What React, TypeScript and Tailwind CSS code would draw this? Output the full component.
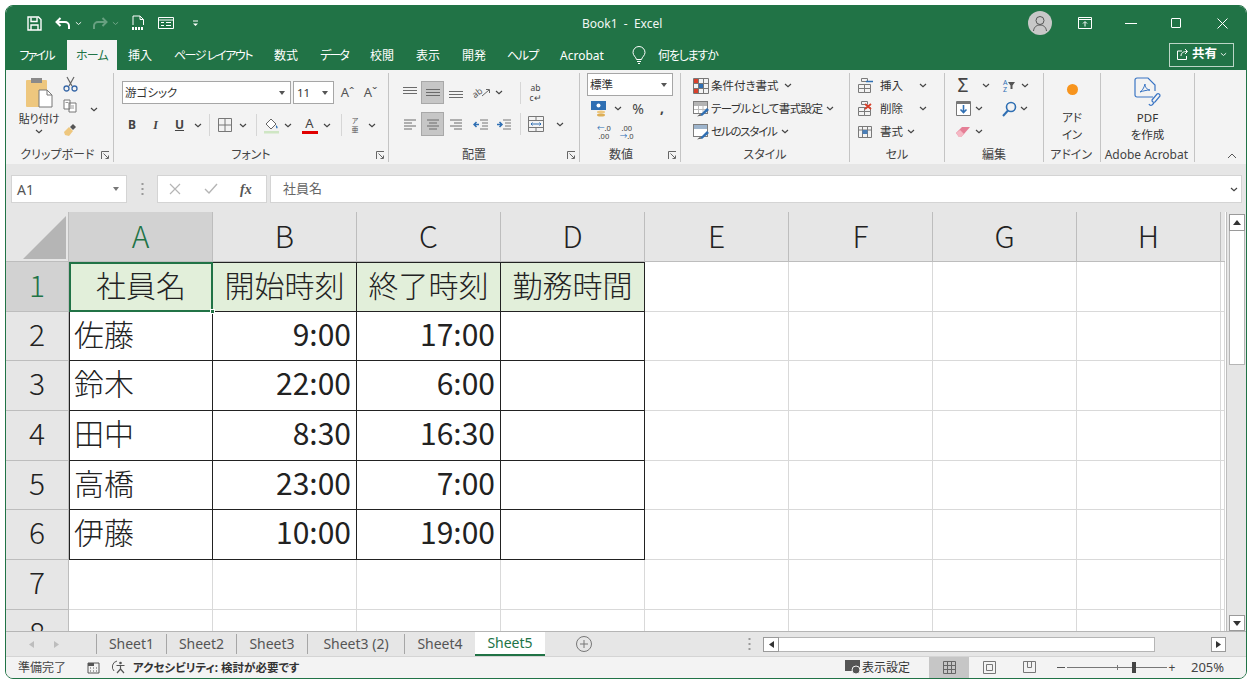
import React from 'react';

function Chev({ className = '' }: { className?: string }) {
  return (
    <svg width="8" height="5" viewBox="0 0 8 5" className={className}>
      <path d="M1 1l3 2.6L7 1" fill="none" stroke="#444" strokeWidth="1.2" />
    </svg>
  );
}

function Launcher() {
  return (
    <svg width="9" height="9" viewBox="0 0 9 9">
      <path d="M.5 8V.5H8M2.5 2.5L7 7M4.5 7.5H7.5V4.5" fill="none" stroke="#666" strokeWidth="1" />
    </svg>
  );
}

function Group({ w, label, launcher, labelClass = '', children }: { w: string; label: string; launcher?: boolean; labelClass?: string; children: React.ReactNode }) {
  return (
    <div className={`${w} shrink-0 h-[89px] flex flex-col border-r border-[#c4c4c4]`}>
      <div className="h-[75px] overflow-visible">{children}</div>
      <div className="h-[14px] flex items-center text-[12px] text-[#444]">
        <span className="w-[16px]" />
        <span className={`flex-1 text-center whitespace-nowrap ${labelClass}`}>{label}</span>
        <span className="w-[16px] pr-[3px] flex items-center justify-end">{launcher && <Launcher />}</span>
      </div>
    </div>
  );
}

function Slot({ w, children, on }: { w: string; children?: React.ReactNode; on?: boolean }) {
  return (
    <div className={`${w} h-full shrink-0 flex items-center justify-center ${on ? 'bg-[#c6c6c6] border border-[#a8a8a8]' : ''}`}>
      {children}
    </div>
  );
}

function Sep() {
  return <div className="w-[1px] h-[22px] shrink-0 bg-[#d6d6d6]" />;
}

function AlignIcon({ kind }: { kind: 'l' | 'c' | 'r' }) {
  const rows =
    kind === 'l'
      ? ['M1 2h12', 'M1 5h8', 'M1 8h12', 'M1 11h8']
      : kind === 'r'
        ? ['M1 2h12', 'M5 5h8', 'M1 8h12', 'M5 11h8']
        : ['M1 2h12', 'M3 5h8', 'M1 8h12', 'M3 11h8'];
  return (
    <svg width="14" height="13" viewBox="0 0 14 13">
      {rows.map((d) => (
        <path key={d} d={d} stroke="#6b6b6b" strokeWidth="1" />
      ))}
    </svg>
  );
}

function VAlignIcon({ pos }: { pos: 't' | 'm' | 'b' }) {
  const ys = pos === 't' ? [1, 4, 7] : pos === 'm' ? [3, 6, 9] : [5, 8, 11];
  return (
    <svg width="16" height="13" viewBox="0 0 16 13">
      {ys.map((v) => (
        <path key={v} d={`M1 ${v + 0.5}h14`} stroke="#6b6b6b" strokeWidth="1" />
      ))}
    </svg>
  );
}

function TableStyleIcon({ cell }: { cell?: boolean }) {
  return (
    <svg width="17" height="16" viewBox="0 0 17 16">
      <rect x=".5" y=".5" width="14" height="12" fill="#fff" stroke="#7d7d7d" />
      <rect x="1" y="1" width="13" height="4" fill={cell ? '#9db4cc' : '#b4b4b4'} />
      {!cell && <path d="M1 8.5h13M5.5 5v7M10 5v7" stroke="#bbb" />}
      <path d="M7 14l7-7 2 2-7 6z" fill="#2f6fb3" />
      <path d="M4 15.5l3-2.5 1.5 1.5z" fill="#555" />
    </svg>
  );
}

function CellsIcon({ kind }: { kind: 'ins' | 'del' | 'fmt' }) {
  return (
    <svg width="17" height="16" viewBox="0 0 17 16">
      {kind !== 'fmt' ? (
        <g fill="none" stroke="#7a7a7a">
          <path d="M4.5 .5h6v3h-6zM1.5 6.5h6v4h-6zM7.5 6.5h6v4h-6zM1.5 10.5h6v4h-6zM7.5 10.5h6v4h-6z" />
          {kind === 'ins' && <path d="M9 3.5h7" stroke="#2f6fb3" strokeWidth="1.4" />}
        </g>
      ) : (
        <g fill="none" stroke="#7a7a7a">
          <path d="M1.5 2.5h13v11h-13zM1.5 6h13M5.5 2.5v11M10.5 2.5v11" />
          <rect x="5.5" y="6" width="5" height="4" fill="#4a7fb8" stroke="none" />
        </g>
      )}
      {kind === 'del' && <path d="M8 3l6 5M14 3L8 8" stroke="#d8402b" strokeWidth="1.8" />}
    </svg>
  );
}

function Tab({ w, label, active, tr = '' }: { w: string; label: string; active?: boolean; tr?: string }) {
  return (
    <div className={`${w} h-full shrink-0 pt-[1px] flex items-center justify-center whitespace-nowrap text-[12px] ${tr} ${active ? 'bg-[#f3f3f3] text-[#217346]' : 'text-white'}`}>
      {label}
    </div>
  );
}

function ColHead({ c, on }: { c: string; on?: boolean }) {
  return (
    <div className={`flex items-center justify-center pb-[3px] text-[30px] font-light border-r border-b border-[#bdbdbd] ${on ? 'bg-[#d2d2d2] text-[#217346]' : 'bg-[#e6e6e6] text-[#222]'}`}>
      {c}
    </div>
  );
}

function RowHead({ n, on }: { n: number; on?: boolean }) {
  return (
    <div className={`flex items-center justify-center text-[30px] font-light border-r border-b border-[#bdbdbd] ${on ? 'bg-[#d2d2d2] text-[#217346] pb-[4px]' : 'bg-[#e6e6e6] text-[#222] pb-[6px]'}`}>
      {n}
    </div>
  );
}

function Blanks({ n }: { n: number }) {
  return (
    <>
      {Array.from({ length: n }).map((_, i) => (
        <div key={i} className="border-r border-b border-[#d9d9d9] bg-white" />
      ))}
    </>
  );
}

const rows = [
  { n: 2, name: '佐藤', a: '9:00', b: '17:00' },
  { n: 3, name: '鈴木', a: '22:00', b: '6:00' },
  { n: 4, name: '田中', a: '8:30', b: '16:30' },
  { n: 5, name: '高橋', a: '23:00', b: '7:00' },
  { n: 6, name: '伊藤', a: '10:00', b: '19:00' },
];

const sheets = [
  { s: 'Sheet1', w: 'w-[70px]' },
  { s: 'Sheet2', w: 'w-[70px]' },
  { s: 'Sheet3', w: 'w-[71px]' },
  { s: 'Sheet3 (2)', w: 'w-[97px]' },
  { s: 'Sheet4', w: 'w-[71px]' },
];

const headCell = 'bg-[#e2efda] border-t border-r border-b border-[#222] flex items-center justify-center pb-[4px] text-[30px] font-light text-[#222] whitespace-nowrap';
const bodyCell = 'bg-white border-r border-b border-[#222] flex items-center pb-[6px] text-[30px] text-[#222] whitespace-nowrap';

export default function App() {
  return (
    <div className="w-[1252px] h-[685px] bg-white pt-[5px] pl-[5px] overflow-hidden [font-family:'Noto_Sans','Noto_Sans_CJK_JP',sans-serif] [font-feature-settings:'palt']">
      <div className="w-[1242px] h-[674px] rounded-[8px] overflow-hidden border border-[#217346] flex flex-col bg-[#e6e6e6]">
        {/* title bar */}
        <div className="h-[34px] shrink-0 bg-[#217346] flex items-center text-white">
          <div className="w-[21px] shrink-0" />
          <svg width="15" height="15" viewBox="0 0 15 15" className="shrink-0">
            <path d="M1 1h10.5L14 3.5V14H1z" fill="none" stroke="#fff" strokeWidth="1.4" />
            <path d="M4 1.5v4h6v-4M4 14V9h7v5" fill="none" stroke="#fff" strokeWidth="1.4" />
          </svg>
          <div className="w-[13px] shrink-0" />
          <svg width="16" height="13" viewBox="0 0 16 13" className="shrink-0">
            <path d="M5.5 1L1.5 5l4 4M2 5h8a4 4 0 0 1 4 4v3" fill="none" stroke="#fff" strokeWidth="2" />
          </svg>
          <svg width="7" height="5" viewBox="0 0 8 5" className="ml-[4px] shrink-0">
            <path d="M1 1l3 2.6L7 1" fill="none" stroke="#fff" />
          </svg>
          <div className="w-[10px] shrink-0" />
          <svg width="16" height="13" viewBox="0 0 16 13" className="shrink-0 opacity-40">
            <path d="M10.5 1l4 4-4 4M14 5H6a4 4 0 0 0-4 4v3" fill="none" stroke="#cfe3d7" strokeWidth="2" />
          </svg>
          <svg width="7" height="5" viewBox="0 0 8 5" className="ml-[4px] shrink-0 opacity-40">
            <path d="M1 1l3 2.6L7 1" fill="none" stroke="#fff" />
          </svg>
          <div className="w-[12px] shrink-0" />
          <svg width="14" height="16" viewBox="0 0 14 16" className="shrink-0">
            <path d="M2 10V1h7l3.5 3.5V10M9 1v3.5h3.5" fill="none" stroke="#fff" />
            <path d="M1 13.5h12" stroke="#fff" strokeWidth="3" strokeDasharray="2 1" />
          </svg>
          <div className="w-[13px] shrink-0" />
          <svg width="16" height="14" viewBox="0 0 16 14" className="shrink-0">
            <path d="M.5 1.5h15v11H.5zM.5 4h15" fill="none" stroke="#fff" />
            <path d="M3 6.5h3M3 9.5h3M8 6.5h5M8 9.5h5" stroke="#fff" />
          </svg>
          <div className="w-[18px] shrink-0" />
          <svg width="7" height="7" viewBox="0 0 7 7" className="shrink-0">
            <path d="M1 1h5" stroke="#fff" />
            <path d="M1 3.5h5L3.5 6z" fill="#fff" />
          </svg>
          <div className="flex-1 pl-[383px] pt-[1px] text-[12px] whitespace-nowrap text-[#f2f7f4]">Book1&nbsp; -&nbsp; Excel</div>
          <div className="w-[24px] h-[24px] rounded-full bg-[#c8c8c8] flex items-center justify-center shrink-0">
            <svg width="16" height="17" viewBox="0 0 16 17">
              <circle cx="8" cy="5.5" r="4" fill="none" stroke="#555" />
              <path d="M1.5 16c.5-4 3-6 6.5-6s6 2 6.5 6" fill="none" stroke="#555" />
            </svg>
          </div>
          <div className="w-[26px] shrink-0" />
          <svg width="14" height="12" viewBox="0 0 14 12" className="shrink-0">
            <path d="M.5 .5h13v11H.5zM.5 2.500h13" fill="none" stroke="#fff" />
            <path d="M7 9.500V5M5 6.500L7 4.500l2 2" fill="none" stroke="#fff" />
          </svg>
          <div className="w-[33px] shrink-0" />
          <div className="w-[12px] h-[1px] bg-white shrink-0" />
          <div className="w-[34px] shrink-0" />
          <div className="w-[10px] h-[10px] border border-white rounded-[1px] shrink-0" />
          <div className="w-[36px] shrink-0" />
          <svg width="11" height="11" viewBox="0 0 11 11" className="shrink-0">
            <path d="M.5 .5l10 10M10.5 .5l-10 10" stroke="#fff" />
          </svg>
          <div className="w-[18px] shrink-0" />
        </div>

        {/* ribbon tabs */}
        <div className="h-[30px] shrink-0 bg-[#217346] flex items-center">
          <Tab w="w-[61px]" label="ファイル" tr="tracking-[-1.8px]" />
          <Tab w="w-[50px]" label="ホーム" tr="tracking-[-0.8px]" active />
          <Tab w="w-[46px]" label="挿入" />
          <Tab w="w-[100px]" label="ページ レイアウト" tr="tracking-[-1.4px]" />
          <Tab w="w-[46px]" label="数式" />
          <Tab w="w-[50px]" label="データ" tr="tracking-[-2px]" />
          <Tab w="w-[46px]" label="校閲" />
          <Tab w="w-[46px]" label="表示" />
          <Tab w="w-[46px]" label="開発" />
          <Tab w="w-[51px]" label="ヘルプ" tr="tracking-[-1px]" />
          <Tab w="w-[68px]" label="Acrobat" />
          <div className="w-[16px] shrink-0" />
          <svg width="14" height="19" viewBox="0 0 14 19" className="shrink-0">
            <path d="M4.5 13.5C4 11 1 9.500 1 6.500a6 6 0 0 1 12 0c0 3-3 4.500-3.500 7zM5 15.500h4M6 17.500h2" fill="none" stroke="#fff" />
          </svg>
          <div className="w-[12px] shrink-0" />
          <span className="text-[12px] pt-[1px] tracking-[-1.2px] text-white whitespace-nowrap w-[60px] shrink-0">何をしますか</span>
          <div className="flex-1" />
          <div className="w-[65px] h-[24px] shrink-0 border border-[#bcd5c6] flex items-center justify-center gap-[3px] text-white mb-[1px]">
            <svg width="13" height="13" viewBox="0 0 13 13">
              <path d="M6 3H1.500v8.500h9V8M5 8c0-3 2-4.500 6-4.500M9 1l2.500 2.500L9 6" fill="none" stroke="#fff" />
            </svg>
            <span className="text-[12.500px] font-bold">共有</span>
            <svg width="7" height="5" viewBox="0 0 8 5">
              <path d="M1 1l3 2.600L7 1" fill="none" stroke="#fff" />
            </svg>
          </div>
          <div className="w-[12px] shrink-0" />
        </div>

        {/* ribbon */}
        <div className="h-[94px] shrink-0 bg-[#f3f3f3] flex items-start pt-[3px] text-[#333]">
          <Group w="w-[108px]" label="クリップボード" labelClass="pr-[4px]" launcher>
            <div className="flex h-full">
              <div className="w-[52px] shrink-0 flex flex-col items-center pl-[14px]">
                <svg width="28" height="32" viewBox="0 0 28 32" className="mt-[4px] shrink-0">
                  <rect x="1" y="3" width="21" height="27" rx="1" fill="#eec77e" />
                  <rect x="6" y="1" width="11" height="5" fill="#8a8a8a" />
                  <path d="M14 13h8l5 5v12H14z" fill="#fff" stroke="#777" />
                  <path d="M22 13v5h5" fill="none" stroke="#777" />
                </svg>
                <span className="text-[11px] tracking-[-0.3px] mt-[3px] whitespace-nowrap leading-[14px]">貼り付け</span>
                <Chev className="mt-[3px]" />
              </div>
              <div className="w-[24px] shrink-0 flex flex-col items-center pt-[3px]">
                <svg width="15" height="16" viewBox="0 0 15 16">
                  <path d="M4 1l5 9M11 1L6 10" stroke="#666" strokeWidth="1.200" />
                  <circle cx="3.500" cy="12.500" r="2.500" fill="none" stroke="#3a69a8" strokeWidth="1.300" />
                  <circle cx="11.500" cy="12.500" r="2.500" fill="none" stroke="#3a69a8" strokeWidth="1.300" />
                </svg>
                <svg width="14" height="14" viewBox="0 0 14 14" className="mt-[7px]">
                  <path d="M1 1h6v9H1zM6 4h7v9H6z" fill="#fff" stroke="#777" />
                  <path d="M8 7h3M8 9h3M2.500 3.500h3" stroke="#999" />
                </svg>
                <svg width="15" height="14" viewBox="0 0 15 14" className="mt-[10px]">
                  <path d="M1 9l5-5 4 4-4 5-4-1z" fill="#eec77e" />
                  <path d="M7 4l3-3 3 3-3 3z" fill="#555" />
                </svg>
              </div>
              <div className="flex items-start pt-[34px] pl-[8px]"><Chev /></div>
            </div>
          </Group>

          <Group w="w-[275px]" label="フォント" launcher>
            <div className="flex flex-col">
              <div className="flex items-center h-[23px] mt-[8px] pl-[8px]">
                <div className="w-[169px] h-[23px] shrink-0 bg-white border border-[#a6a6a6] flex items-center pl-[2px] pr-[5px] text-[11.500px] justify-between">
                  <span>游ゴシック</span>
                  <svg width="6" height="4" viewBox="0 0 6 4"><path d="M0 0h6L3 4z" fill="#555" /></svg>
                </div>
                <div className="w-[41px] h-[23px] ml-[2px] shrink-0 bg-white border border-[#a6a6a6] flex items-center pl-[3px] pr-[5px] text-[11.500px] justify-between">
                  <span>11</span>
                  <svg width="6" height="4" viewBox="0 0 6 4"><path d="M0 0h6L3 4z" fill="#555" /></svg>
                </div>
                <span className="ml-[2px] w-[23px] text-center text-[13px] text-[#555]">Aˆ</span>
                <span className="w-[23px] text-center text-[13px] text-[#555]">Aˇ</span>
              </div>
              <div className="flex items-center h-[24px] mt-[9px] pl-[7px]">
                <Slot w="w-[22px]"><span className="text-[12px] font-bold text-[#444]">B</span></Slot>
                <Slot w="w-[25px]"><span className="text-[12px] font-bold italic text-[#444] [font-family:'Liberation_Serif',serif]">I</span></Slot>
                <Slot w="w-[23px]"><span className="text-[12px] font-bold underline text-[#444]">U</span></Slot>
                <Slot w="w-[13px]"><Chev /></Slot>
                <Slot w="w-[11px]"><Sep /></Slot>
                <Slot w="w-[20px]">
                  <svg width="14" height="14" viewBox="0 0 14 14"><path d="M.5 .5h13v13H.5zM7 .5v13M.5 7h13" fill="none" stroke="#777" /></svg>
                </Slot>
                <Slot w="w-[15px]"><Chev /></Slot>
                <Slot w="w-[12px]"><Sep /></Slot>
                <Slot w="w-[18px]">
                  <svg width="15" height="17" viewBox="0 0 15 17">
                    <path d="M2 7l5-5 5 5-5 5z" fill="#fff" stroke="#666" />
                    <path d="M12 8c1 1 2 2 1.500 3s-2 0-1.500-3z" fill="#2f6fb3" />
                    <rect x="0" y="14" width="15" height="2.500" fill="#cfe6c4" />
                  </svg>
                </Slot>
                <Slot w="w-[16px]"><Chev /></Slot>
                <div className="w-[5px] shrink-0" />
                <Slot w="w-[17px]">
                  <div className="flex flex-col items-center leading-none">
                    <span className="text-[13px] text-[#444] leading-[13px]">A</span>
                    <span className="w-[16px] h-[3px] bg-[#e00000] mt-[1px]" />
                  </div>
                </Slot>
                <Slot w="w-[17px]"><Chev /></Slot>
                <Slot w="w-[12px]"><Sep /></Slot>
                <Slot w="w-[16px]">
                  <div className="flex flex-col items-center text-[7px] leading-[9px] text-[#555]">
                    <span>ア</span>
                    <span>亜</span>
                  </div>
                </Slot>
                <Slot w="w-[18px]"><Chev /></Slot>
              </div>
            </div>
          </Group>

          <Group w="w-[191px]" label="配置" labelClass="pr-[20px]" launcher>
            <div className="flex flex-col">
              <div className="flex items-center h-[23px] mt-[8px] pl-[10px]">
                <Slot w="w-[22px]"><VAlignIcon pos="t" /></Slot>
                <Slot w="w-[23px]" on><VAlignIcon pos="m" /></Slot>
                <Slot w="w-[24px]"><VAlignIcon pos="b" /></Slot>
                <Slot w="w-[26px]">
                  <div className="flex items-center">
                    <span className="text-[9px] leading-[10px] text-[#555] -rotate-[35deg]">ab</span>
                    <svg width="8" height="9" viewBox="0 0 8 9">
                      <path d="M0 8l7-6M4 1.500h3.500V5" fill="none" stroke="#666" />
                    </svg>
                  </div>
                </Slot>
                <Slot w="w-[10px]"><Chev /></Slot>
                <div className="w-[16px] shrink-0" />
                <Slot w="w-[1px]"><Sep /></Slot>
                <Slot w="w-[29px]">
                  <div className="flex flex-col items-center text-[8.500px] leading-[10px] text-[#444]">
                    <span>ab</span>
                    <span>c↵</span>
                  </div>
                </Slot>
              </div>
              <div className="flex items-center h-[24px] mt-[8px] pl-[10px]">
                <Slot w="w-[22px]"><AlignIcon kind="l" /></Slot>
                <Slot w="w-[23px]" on><AlignIcon kind="c" /></Slot>
                <Slot w="w-[24px]"><AlignIcon kind="r" /></Slot>
                <Slot w="w-[25px]">
                  <svg width="16" height="13" viewBox="0 0 16 13">
                    <path d="M7 2h8M9 5h6M9 8h6M7 11h8" stroke="#777" />
                    <path d="M1 6.500h5M3.500 4L1 6.500 3.500 9" fill="none" stroke="#2f6fb3" strokeWidth="1.500" />
                  </svg>
                </Slot>
                <Slot w="w-[22px]">
                  <svg width="16" height="13" viewBox="0 0 16 13">
                    <path d="M7 2h8M9 5h6M9 8h6M7 11h8" stroke="#777" />
                    <path d="M1 6.500h5M3.500 4L6 6.500 3.500 9" fill="none" stroke="#2f6fb3" strokeWidth="1.500" />
                  </svg>
                </Slot>
                <div className="w-[5px] shrink-0" />
                <Slot w="w-[1px]"><Sep /></Slot>
                <Slot w="w-[29px]">
                  <svg width="16" height="16" viewBox="0 0 16 16">
                    <path d="M.5 .5h15v15H.5zM.5 4.500h15M.5 11.500h15M8 .5v4M8 11.500v4" fill="none" stroke="#777" />
                    <path d="M3 8h10M4.500 6.500L3 8l1.500 1.500M11.500 6.500L13 8l-1.500 1.500" fill="none" stroke="#2f6fb3" />
                  </svg>
                </Slot>
                <div className="w-[3px] shrink-0" />
                <Slot w="w-[14px]"><Chev /></Slot>
              </div>
            </div>
          </Group>

          <Group w="w-[101px]" label="数値" labelClass="pr-[18px]" launcher>
            <div className="flex flex-col pl-[7px]">
              <div className="w-[86px] h-[23px] bg-white border border-[#a6a6a6] flex items-center justify-between pl-[2px] pr-[5px] text-[11.500px]">
                <span>標準</span>
                <svg width="6" height="4" viewBox="0 0 6 4"><path d="M0 0h6L3 4z" fill="#555" /></svg>
              </div>
              <div className="flex items-center h-[22px] mt-[1px]">
                <Slot w="w-[25px]">
                  <svg width="17" height="17" viewBox="0 0 17 17">
                    <rect x="0" y="1" width="15" height="9" fill="#2f6fb3" />
                    <circle cx="7.500" cy="5.500" r="2" fill="#fff" />
                    <ellipse cx="10" cy="12" rx="4" ry="1.500" fill="#eec77e" />
                    <ellipse cx="10" cy="15" rx="4" ry="1.500" fill="#dcae56" />
                  </svg>
                </Slot>
                <Slot w="w-[11px]"><Chev /></Slot>
                <div className="w-[7px] shrink-0" />
                <span className="w-[16px] text-center text-[14px] text-[#444]">%</span>
                <div className="w-[8px] shrink-0" />
                <span className="w-[16px] text-center text-[14px] font-bold text-[#444] leading-none">,</span>
              </div>
              <div className="flex items-center h-[24px] mt-[1px] pl-[10px] gap-[9px] text-[7.500px] leading-[8px] text-[#444]">
                <div className="flex flex-col items-center">
                  <span><span className="text-[#2f6fb3]">←</span>.0</span>
                  <span>.00</span>
                </div>
                <div className="flex flex-col items-center">
                  <span>.00</span>
                  <span><span className="text-[#2f6fb3]">→</span>.0</span>
                </div>
              </div>
            </div>
          </Group>

          <Group w="w-[169px]" label="スタイル">
            <div className="flex flex-col pt-[1px] pl-[12px] text-[11.500px] whitespace-nowrap">
              <div className="flex items-center h-[23px] gap-[2px]">
                <svg width="16" height="16" viewBox="0 0 16 16">
                  <path d="M.5 .5h15v15H.5zM5.500 .5v15M10.500 .5v15M.5 5.500h15M.5 10.500h15" fill="none" stroke="#777" />
                  <rect x="1" y="1" width="4" height="4" fill="#d8402b" />
                  <rect x="6" y="6" width="4" height="4" fill="#2f6fb3" />
                  <rect x="1" y="11" width="4" height="4" fill="#d8402b" />
                </svg>
                <span>条件付き書式</span>
                <Chev className="ml-[3px]" />
              </div>
              <div className="flex items-center h-[23px] gap-[1px]">
                <TableStyleIcon />
                <span className="tracking-[-0.6px]">テーブルとして書式設定</span>
                <Chev className="ml-[3px]" />
              </div>
              <div className="flex items-center h-[23px] gap-[1px]">
                <TableStyleIcon cell />
                <span className="tracking-[-1.2px]">セルのスタイル</span>
                <Chev className="ml-[3px]" />
              </div>
            </div>
          </Group>

          <Group w="w-[95px]" label="セル">
            <div className="flex flex-col pt-[1px] pl-[7px] text-[11.500px] whitespace-nowrap">
              <div className="flex items-center h-[23px]">
                <CellsIcon kind="ins" />
                <span className="ml-[6px] w-[24px]">挿入</span>
                <Chev className="ml-[15px]" />
              </div>
              <div className="flex items-center h-[23px]">
                <CellsIcon kind="del" />
                <span className="ml-[6px] w-[24px]">削除</span>
                <Chev className="ml-[15px]" />
              </div>
              <div className="flex items-center h-[23px]">
                <CellsIcon kind="fmt" />
                <span className="ml-[6px] w-[24px]">書式</span>
                <Chev className="ml-[3px]" />
              </div>
            </div>
          </Group>

          <Group w="w-[99px]" label="編集">
            <div className="flex flex-col pt-[1px] pl-[11px]">
              <div className="flex items-center h-[23px]">
                <span className="w-[14px] text-[19px] leading-none text-[#444] text-center">Σ</span>
                <Chev className="ml-[12px]" />
                <div className="w-[13px] shrink-0" />
                <div className="flex items-center gap-[1px]">
                  <div className="flex flex-col text-[7px] leading-[7px] text-[#2f6fb3]">
                    <span>A</span>
                    <span>Z</span>
                  </div>
                  <svg width="7" height="7" viewBox="0 0 7 7"><path d="M0 0h7L4.500 3.500V7h-2V3.500z" fill="#555" /></svg>
                </div>
                <Chev className="ml-[6px]" />
              </div>
              <div className="flex items-center h-[23px]">
                <svg width="15" height="15" viewBox="0 0 15 15">
                  <path d="M.5 .5h14v14H.5z" fill="#fff" stroke="#777" />
                  <path d="M.5 2h14" stroke="#777" strokeWidth="2" />
                  <path d="M7.500 4v7M4.500 8.500l3 3 3-3" fill="none" stroke="#2f6fb3" strokeWidth="1.600" />
                </svg>
                <Chev className="ml-[4px]" />
                <div className="w-[19px] shrink-0" />
                <svg width="15" height="16" viewBox="0 0 15 16">
                  <circle cx="9" cy="6" r="4.500" fill="none" stroke="#2f6fb3" strokeWidth="1.600" />
                  <path d="M6 9.500L1 15" stroke="#2f6fb3" strokeWidth="2" />
                </svg>
                <Chev className="ml-[3px]" />
              </div>
              <div className="flex items-center h-[23px]">
                <svg width="15" height="12" viewBox="0 0 15 12">
                  <path d="M0 7l6-6h8L8 8l-3 3H3z" fill="#e57f96" />
                  <path d="M0 7l3 4h2l3-3-4-4z" fill="#f5b8c4" />
                </svg>
                <Chev className="ml-[4px]" />
              </div>
            </div>
          </Group>

          <Group w="w-[57px]" label="アドイン">
            <div className="flex flex-col items-center pt-[11px] text-[11.500px] leading-[17px]">
              <div className="w-[11px] h-[11px] rounded-full bg-[#f7941d]" />
              <span className="mt-[14px]">アド</span>
              <span>イン</span>
            </div>
          </Group>

          <Group w="w-[94px]" label="Adobe Acrobat">
            <div className="flex flex-col items-center pt-[4px] text-[11.500px] leading-[17px]">
              <svg width="28" height="30" viewBox="0 0 28 30">
                <path d="M19 20H3a2 2 0 0 1-2-2V3a2 2 0 0 1 2-2h11l7 7v6" fill="none" stroke="#3a75c4" strokeWidth="1.200" />
                <path d="M6 15c2-1 4-4 5-8 0 3 2 6 5 6-3 0-7 1-10 2z" fill="none" stroke="#3a75c4" />
                <path d="M18 23l5-6a2 2 0 0 1 3 2l-5 6a2 2 0 0 1-3-2zM15 27a2 2 0 0 0 3 1l2-2" fill="none" stroke="#3a75c4" strokeWidth="1.200" />
              </svg>
              <span className="mt-[2px]">PDF</span>
              <span>を作成</span>
            </div>
          </Group>

          <div className="flex-1 h-[89px] flex items-end justify-end pr-[9px] pb-[3px]">
            <svg width="10" height="6" viewBox="0 0 10 6"><path d="M1 5l4-4 4 4" fill="none" stroke="#555" /></svg>
          </div>
        </div>

        {/* formula bar */}
        <div className="h-[48px] shrink-0 bg-[#e6e6e6] flex items-start pt-[11px] pl-[5px] text-[13px] text-[#666]">
          <div className="w-[116px] h-[28px] bg-white border border-[#d4d4d4] flex items-center justify-between pl-[5px] pr-[7px] text-[#555]">
            <span className="text-[14px]">A1</span>
            <svg width="6" height="4" viewBox="0 0 6 4"><path d="M0 0h6L3 4z" fill="#777" /></svg>
          </div>
          <div className="w-[30px] h-[28px] flex items-center justify-center">
            <svg width="3" height="12" viewBox="0 0 3 12"><path d="M1.500 0v2M1.500 5v2M1.500 10v2" stroke="#999" strokeWidth="2" /></svg>
          </div>
          <div className="w-[110px] h-[28px] bg-white border border-[#d4d4d4] flex items-center">
            <svg width="12" height="12" viewBox="0 0 12 12" className="ml-[11px]"><path d="M1 1l10 10M11 1L1 11" stroke="#b5b5b5" strokeWidth="1.200" /></svg>
            <svg width="14" height="12" viewBox="0 0 14 12" className="ml-[23px]"><path d="M1 6l4 4 8-9" fill="none" stroke="#b5b5b5" strokeWidth="1.400" /></svg>
            <span className="ml-[22px] text-[14px] italic font-bold text-[#555] [font-family:'Liberation_Serif',serif]">fx</span>
          </div>
          <div className="w-[972px] h-[28px] ml-[3px] bg-white border border-[#d4d4d4] flex items-center justify-between pl-[12px] pr-[3px] text-[13px] text-[#666]">
            <span>社員名</span>
            <Chev />
          </div>
        </div>

        {/* sheet + scrollbar */}
        <div className="flex-1 min-h-0 flex bg-[#e6e6e6]">
          <div className="flex-1 min-w-0 overflow-hidden bg-white">
            <div className="grid [grid-template-columns:63px_repeat(8,144px)_4px] [grid-template-rows:50px_repeat(8,49.7px)] [font-family:'Noto_Sans_CJK_JP',sans-serif] [font-feature-settings:normal]">
              <div className="bg-[#e6e6e6] border-r border-b border-[#bdbdbd] flex items-end justify-end p-[2px]">
                <div className="w-[43px] h-[43px] bg-[#b5b5b5] [clip-path:polygon(100%_0,100%_100%,0_100%)]" />
              </div>
              <ColHead c="A" on />
              <ColHead c="B" />
              <ColHead c="C" />
              <ColHead c="D" />
              <ColHead c="E" />
              <ColHead c="F" />
              <ColHead c="G" />
              <ColHead c="H" />
              <div className="bg-[#e6e6e6] border-b border-[#bdbdbd]" />

              <RowHead n={1} on />
              <div className={`${headCell} border-l relative`}>
                社員名
                <div className="absolute -inset-px border-2 border-[#217346]" />
                <div className="absolute -right-[3px] -bottom-[3px] w-[5px] h-[5px] bg-[#217346] border border-white" />
              </div>
              <div className={headCell}>開始時刻</div>
              <div className={headCell}>終了時刻</div>
              <div className={headCell}>勤務時間</div>
              <Blanks n={5} />

              {rows.map((r) => (
                <React.Fragment key={r.n}>
                  <RowHead n={r.n} />
                  <div className={`${bodyCell} border-l pl-[4px] font-light`}>{r.name}</div>
                  <div className={`${bodyCell} justify-end pr-[5px]`}>{r.a}</div>
                  <div className={`${bodyCell} justify-end pr-[5px]`}>{r.b}</div>
                  <div className={bodyCell} />
                  <Blanks n={5} />
                </React.Fragment>
              ))}

              <RowHead n={7} />
              <Blanks n={9} />
              <RowHead n={8} />
              <Blanks n={9} />
            </div>
          </div>
          <div className="w-[20px] shrink-0 bg-[#e6e6e6] flex flex-col items-center pt-[2px] border-l border-[#bdbdbd]">
            <div className="w-[16px] h-[17px] bg-white border border-[#9a9a9a] flex items-center justify-center">
              <svg width="8" height="5" viewBox="0 0 8 5"><path d="M4 0l4 5H0z" fill="#333" /></svg>
            </div>
            <div className="w-[16px] h-[134px] bg-white border border-[#b5b5b5] border-t-0" />
            <div className="flex-1" />
            <div className="w-[16px] h-[16px] bg-white border border-[#9a9a9a] flex items-center justify-center">
              <svg width="8" height="5" viewBox="0 0 8 5"><path d="M0 0h8L4 5z" fill="#333" /></svg>
            </div>
          </div>
        </div>

        {/* sheet tabs */}
        <div className="h-[25px] shrink-0 bg-[#e6e6e6] border-t border-[#b5b5b5] flex items-center text-[14px] text-[#555]">
          <div className="w-[90px] shrink-0 flex items-center pl-[23px] gap-[20px]">
            <svg width="5" height="7" viewBox="0 0 5 7"><path d="M5 0v7L0 3.500z" fill="#bdbdbd" /></svg>
            <svg width="5" height="7" viewBox="0 0 5 7"><path d="M0 0v7l5-3.500z" fill="#bdbdbd" /></svg>
          </div>
          {sheets.map(({ s, w }) => (
            <div key={s} className={`${w} h-[20px] shrink-0 pb-[2px] flex items-center justify-center border-l border-[#a6a6a6] whitespace-nowrap`}>
              {s}
            </div>
          ))}
          <div className="h-full w-[70px] shrink-0 pb-[2px] bg-white border-b-2 border-[#217346] flex items-center justify-center text-[#217346]">Sheet5</div>
          <div className="w-[31px] shrink-0" />
          <svg width="16" height="16" viewBox="0 0 16 16" className="shrink-0">
            <circle cx="8" cy="8" r="7.500" fill="none" stroke="#777" />
            <path d="M8 4v8M4 8h8" stroke="#777" />
          </svg>
          <div className="w-[156px] shrink-0" />
          <svg width="3" height="12" viewBox="0 0 3 12" className="shrink-0"><path d="M1.500 0v2M1.500 5v2M1.500 10v2" stroke="#999" strokeWidth="2" /></svg>
          <div className="w-[12px] shrink-0" />
          <div className="w-[16px] h-[15px] shrink-0 bg-white border border-[#9a9a9a] flex items-center justify-center">
            <svg width="5" height="7" viewBox="0 0 5 7"><path d="M5 0v7L0 3.500z" fill="#333" /></svg>
          </div>
          <div className="w-[376px] h-[15px] shrink-0 bg-white border border-[#b5b5b5] border-l-0" />
          <div className="w-[56px] shrink-0" />
          <div className="w-[15px] h-[15px] shrink-0 bg-white border border-[#9a9a9a] flex items-center justify-center">
            <svg width="5" height="7" viewBox="0 0 5 7"><path d="M0 0v7l5-3.500z" fill="#333" /></svg>
          </div>
        </div>

        {/* status bar */}
        <div className="h-[22px] shrink-0 bg-[#f3f3f3] border-t border-[#d4d4d4] flex items-center text-[12px] text-[#444] whitespace-nowrap">
          <span className="ml-[12px] w-[48px] shrink-0">準備完了</span>
          <svg width="13" height="13" viewBox="0 0 13 13" className="ml-[21px] shrink-0">
            <path d="M1 2h11v10H1z" fill="none" stroke="#555" />
            <path d="M1 2h6v3H1z" fill="#555" />
            <path d="M3 7h1M6 7h1M9 7h1M3 10h1M6 10h1M9 10h1" stroke="#555" />
          </svg>
          <svg width="15" height="15" viewBox="0 0 15 15" className="ml-[12px] shrink-0">
            <path d="M5 1a6 6 0 0 0-3 10" fill="none" stroke="#555" />
            <circle cx="8.500" cy="3" r="1.300" fill="#555" />
            <path d="M4.500 5.500h8M8.500 5.500V9M5 13l3.500-4L12 13" fill="none" stroke="#555" strokeWidth="1.200" />
          </svg>
          <span className="ml-[6px] w-[161px] shrink-0 font-bold text-[11.500px] text-[#333]">アクセシビリティ: 検討が必要です</span>
          <div className="w-[551px] shrink-0" />
          <svg width="17" height="15" viewBox="0 0 17 15" className="shrink-0">
            <rect x="0" y="0" width="15" height="11" fill="#555" />
            <circle cx="11" cy="10" r="4" fill="#555" stroke="#f3f3f3" />
          </svg>
          <span className="w-[50px] shrink-0 text-[#333]">表示設定</span>
          <div className="w-[17px] shrink-0" />
          <div className="w-[40px] h-full shrink-0 bg-[#c6c6c6] flex items-center justify-center">
            <svg width="13" height="13" viewBox="0 0 13 13"><path d="M.5 .5h12v12H.5zM4.500 .5v12M8.500 .5v12M.5 4.500h12M.5 8.500h12" fill="none" stroke="#666" /></svg>
          </div>
          <div className="w-[40px] h-full shrink-0 flex items-center justify-center">
            <svg width="13" height="13" viewBox="0 0 13 13"><path d="M.5 .5h12v12H.5zM3.500 3.500h6v6h-6z" fill="none" stroke="#777" /></svg>
          </div>
          <div className="w-[40px] h-full shrink-0 flex items-center justify-center">
            <svg width="13" height="13" viewBox="0 0 13 13"><path d="M.5 .5h12v11H.5zM4.500 .5v6h4v-6" fill="none" stroke="#777" /></svg>
          </div>
          <div className="w-[8px] shrink-0" />
          <div className="w-[8px] h-[1px] bg-[#555] shrink-0" />
          <div className="w-[2px] shrink-0" />
          <div className="w-[100px] h-[11px] shrink-0 flex items-center relative">
            <div className="w-full h-[1px] bg-[#777]" />
            <div className="absolute left-[50px] top-[3px] w-[1px] h-[5px] bg-[#777]" />
            <div className="absolute left-[65px] top-0 w-[4px] h-[11px] bg-[#444]" />
          </div>
          <span className="w-[10px] shrink-0 text-center">+</span>
          <span className="ml-[14px] shrink-0 text-[13px] text-[#444]">205%</span>
        </div>
      </div>
    </div>
  );
}
